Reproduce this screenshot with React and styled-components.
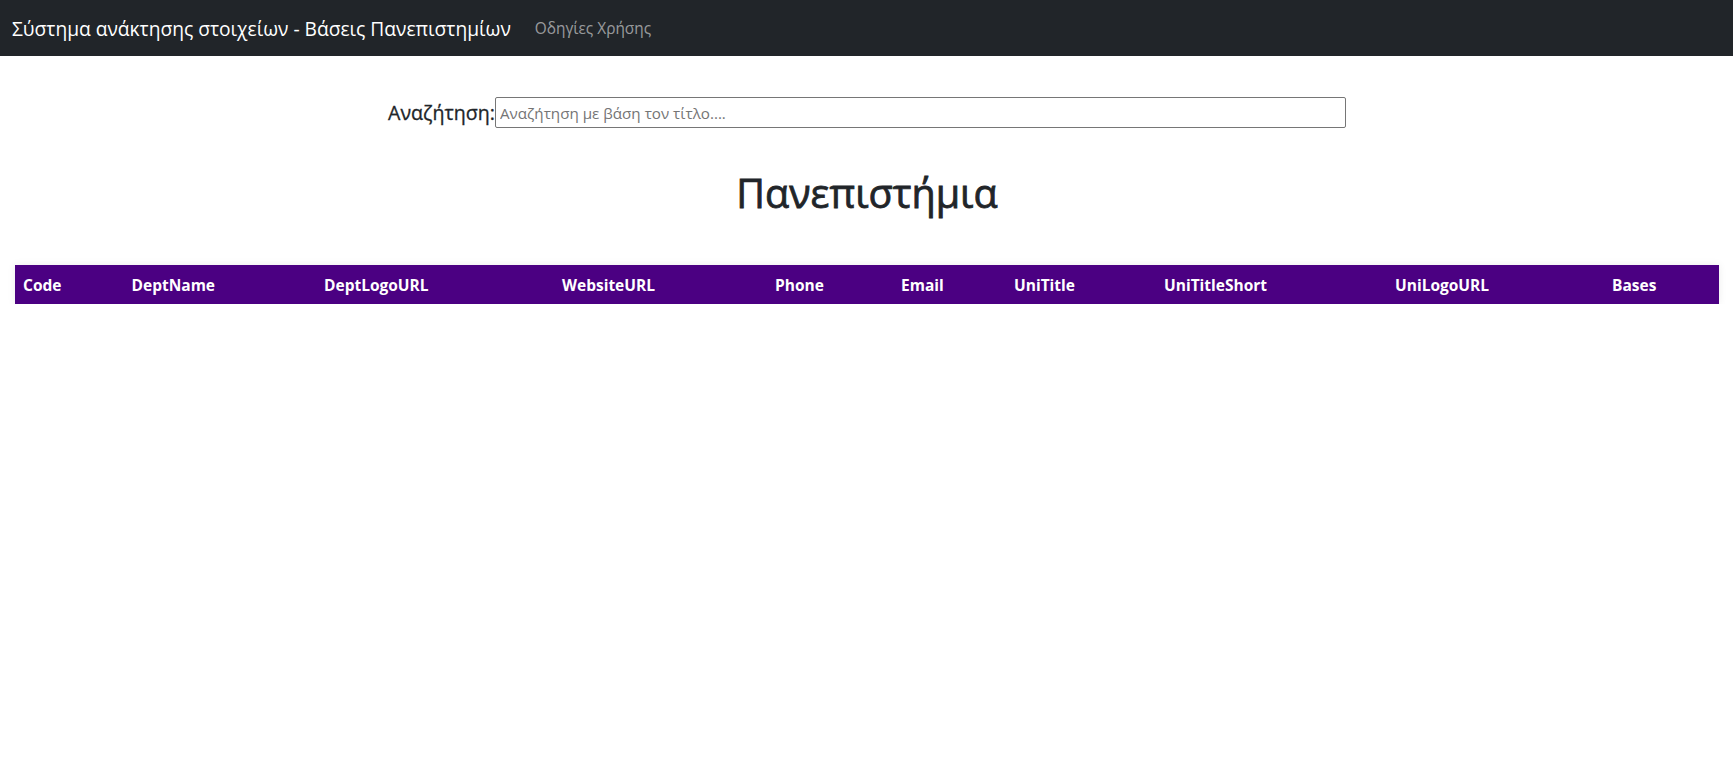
import styled, { createGlobalStyle } from "styled-components";

const GlobalStyle = createGlobalStyle`
  body {
    margin: 0;
    font-family: "Open Sans", "Noto Sans", sans-serif;
    color: #212529;
    background: #fff;
  }
`;

const Navbar = styled.nav`
  height: 56px;
  background: #212529;
  display: flex;
  align-items: center;
  padding: 0 12px;
  box-sizing: border-box;
  gap: 24px;
`;

const Brand = styled.a`
  color: #fff;
  font-size: 19.2px;
  text-decoration: none;
  white-space: nowrap;
`;

const NavLink = styled.a`
  color: rgba(255, 255, 255, 0.55);
  font-size: 15.4px;
  text-decoration: none;
`;

const Main = styled.main`
  padding: 0 14px 0 15px;
`;

const SearchRow = styled.form`
  display: flex;
  justify-content: center;
  align-items: center;
  margin-top: 41px;
`;

const Label = styled.label`
  font-size: 19.6px;
  font-weight: 500;
  color: #212529;
  -webkit-text-stroke: 0.3px #212529;
`;

const SearchInput = styled.input`
  width: 851px;
  height: 31px;
  box-sizing: border-box;
  border: 1px solid #767676;
  border-radius: 2px;
  padding: 0 4px;
  font-family: inherit;
  font-size: 15.2px;
  color: #212529;

  &::placeholder {
    color: #757575;
  }
`;

const Title = styled.h1`
  text-align: center;
  font-size: 39.5px;
  font-weight: 500;
  line-height: 48px;
  margin: 41px 0 48px;
  -webkit-text-stroke: 0.8px #212529;
`;

const Table = styled.table`
  width: 100%;
  table-layout: fixed;
  border-collapse: collapse;
  box-shadow: 0 0 8px rgba(0, 0, 0, 0.08);
`;

const HeadCell = styled.th`
  width: ${(p) => p.$w}px;
  background: #4b0082;
  color: #fff;
  font-size: 15.5px;
  font-weight: 700;
  text-align: left;
  height: 39px;
  padding: 0 8px;
  box-sizing: border-box;
`;

const columns = [
  ["Code", 108.5],
  ["DeptName", 192.5],
  ["DeptLogoURL", 238],
  ["WebsiteURL", 213],
  ["Phone", 126],
  ["Email", 113],
  ["UniTitle", 150],
  ["UniTitleShort", 231],
  ["UniLogoURL", 217],
  ["Bases", 115],
];

export default function App() {
  return (
    <>
      <GlobalStyle />
      <Navbar>
        <Brand href="#">Σύστημα ανάκτησης στοιχείων - Βάσεις Πανεπιστημίων</Brand>
        <NavLink href="#">Οδηγίες Χρήσης</NavLink>
      </Navbar>
      <Main>
        <SearchRow onSubmit={(e) => e.preventDefault()}>
          <Label htmlFor="search">Αναζήτηση:</Label>
          <SearchInput id="search" type="text" placeholder="Αναζήτηση με βάση τον τίτλο...." />
        </SearchRow>
        <Title>Πανεπιστήμια</Title>
        <Table>
          <thead>
            <tr>
              {columns.map(([name, w]) => (
                <HeadCell key={name} $w={w}>{name}</HeadCell>
              ))}
            </tr>
          </thead>
          <tbody></tbody>
        </Table>
      </Main>
    </>
  );
}
